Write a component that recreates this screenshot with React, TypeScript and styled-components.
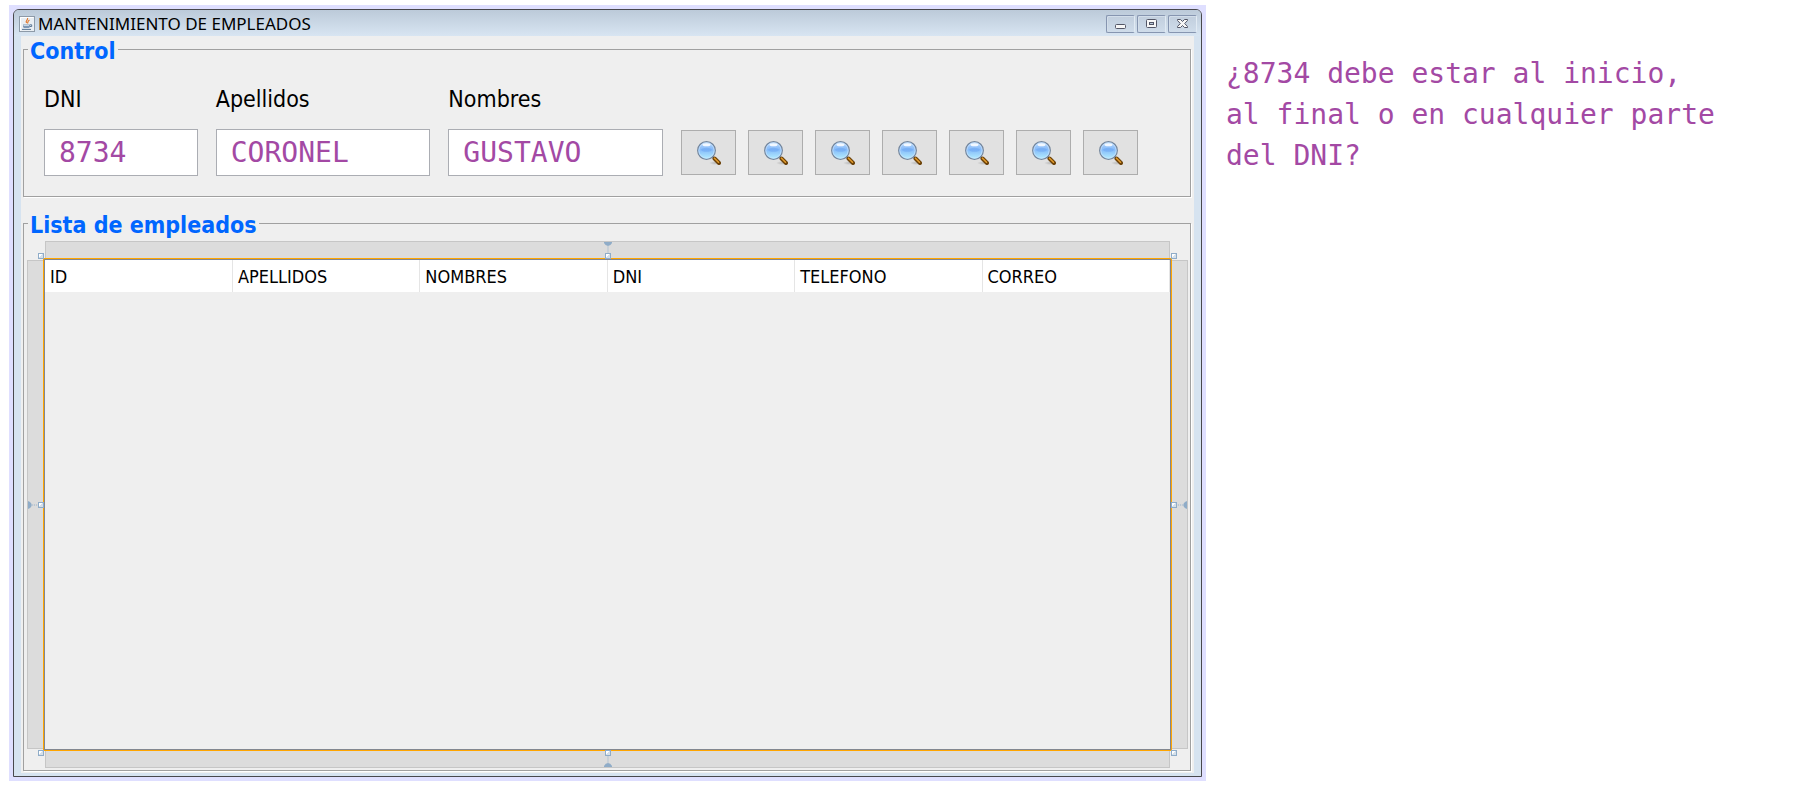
import React from "react";
import styled, { createGlobalStyle, css } from "styled-components";

const ui = '"DejaVu Sans Condensed", Tahoma, "DejaVu Sans", sans-serif';
const mono = '"DejaVu Sans Mono", "Liberation Mono", monospace';
const purple = "#a349a4";
const face = "#efefef";

const Global = createGlobalStyle`
  *, *::before, *::after { box-sizing: border-box; }
  body { margin: 0; background: #fff; color: #000; font-family: ${ui}; }
`;

const Page = styled.div`
  display: grid;
  grid-template-columns: 21fr 10fr;
  column-gap: 18px;
  min-height: 100vh;
  padding: 5px 0 8px 9px;
`;

const Frame = styled.div`
  display: flex;
  min-width: 0;
  padding: 4px;
  background: #dfdfff;
`;

const Window = styled.main`
  flex: 1;
  min-width: 0;
  display: flex;
  flex-direction: column;
  padding: 0 7px 3px;
  background: #d6e3f0;
  border: 1px solid #48484c;
  border-radius: 6px 6px 0 0;
  overflow: hidden;
`;

const TitleBar = styled.header`
  display: flex;
  align-items: center;
  height: 26px;
  margin: 0 -7px;
  padding: 2px 4px 0 5px;
  background: linear-gradient(#bccad9, #d8e5f2);
`;

const Title = styled.h1`
  flex: 1;
  margin: 0 0 0 3px;
  font: 400 17px/24px "Noto Sans", "Segoe UI", sans-serif;
`;

const Caption = styled.div`
  display: flex;
  gap: 2px;
`;

const CaptionButton = styled.button`
  display: grid;
  place-items: center;
  width: 29px;
  height: 18px;
  padding: 0;
  background: linear-gradient(#c1cedd, #cfdcea);
  border: 1px solid #8695b0;
  border-right-color: #e1eaf3;
  border-radius: 2px;
  box-shadow: inset 1px 1px #d3deea;
`;

const Content = styled.div`
  flex: 1;
  display: flex;
  flex-direction: column;
  padding: 0 2px 2px;
  background: ${face};
`;

const Group = styled.fieldset<{ $fill?: boolean }>`
  min-width: 0;
  margin: 0 1px 0 0;
  padding: 0 2px 2px 3px;
  border: 1px solid #a0a0a0;
  box-shadow: 1px 1px #fff;
  ${(p) =>
    p.$fill &&
    css`
      flex: 1;
      display: flex;
      flex-direction: column;
      margin-top: 13px;
    `}
`;

const Legend = styled.legend`
  height: 26px;
  margin-left: 1px;
  padding: 0 2px;
  font: 700 23px/30px ${ui};
  color: #06f;
`;

const Controls = styled.div`
  display: grid;
  grid-template-columns: 154fr 215fr 215fr auto;
  column-gap: 18px;
  align-items: end;
  padding: 21px 50px 18px 17px;
`;

const Field = styled.label`
  display: flex;
  flex-direction: column;
  gap: 14px;
  min-width: 0;
  font: 400 23px/32px ${ui};
`;

const TextBox = styled.input`
  width: 100%;
  height: 47px;
  padding: 0 14px;
  font: 400 28px/40px ${mono};
  color: ${purple};
  background: #fff;
  border: 1px solid #abadb3;
`;

const Actions = styled.div`
  display: flex;
  align-items: center;
  gap: 12px;
  height: 47px;
`;

const SearchButton = styled.button`
  display: grid;
  place-items: center;
  width: 55px;
  height: 45px;
  padding: 0;
  background: #e1e1e1;
  border: 1px solid #adadad;
`;

const Designer = styled.div`
  flex: 1;
  display: grid;
  grid-template-columns: 16px minmax(0, 1fr) 16px;
  grid-template-rows: 17px minmax(300px, 1fr) 17px;
  margin-top: 5px;
`;

type Side = "top" | "right" | "bottom" | "left";

const stripCss = {
  top: css`grid-area: 1 / 2; margin: 0 2px; border-width: 1px 1px 0;`,
  right: css`grid-area: 2 / 3; margin: 2px 0; border-width: 1px 1px 1px 0;`,
  bottom: css`grid-area: 3 / 2; margin: 0 2px; border-width: 0 1px 1px;`,
  left: css`grid-area: 2 / 1; margin: 2px 0; border-width: 1px 0 1px 1px;`,
};

const Strip = styled.div<{ $side: Side }>`
  display: flex;
  align-items: center;
  justify-content: center;
  background: #dcdcdc;
  border: 0 solid #c6c6c6;
  ${(p) => stripCss[p.$side]}
`;

const Selected = styled.section`
  position: relative;
  grid-area: 2 / 2;
  border: 1px solid #ffa500;
`;

const handlePos: Record<string, ReturnType<typeof css>> = {
  nw: css`left: -6px; top: -6px;`,
  n: css`left: calc(50% - 3px); top: -6px;`,
  ne: css`right: -6px; top: -6px;`,
  e: css`right: -6px; top: calc(50% - 3px);`,
  se: css`right: -6px; bottom: -6px;`,
  s: css`left: calc(50% - 3px); bottom: -6px;`,
  sw: css`left: -6px; bottom: -6px;`,
  w: css`left: -6px; top: calc(50% - 3px);`,
};

const Handle = styled.i<{ $at: string }>`
  position: absolute;
  width: 6px;
  height: 6px;
  background: linear-gradient(135deg, #fff 50%, #d5e0ea 50%);
  border: 1px solid #8facc8;
  ${(p) => handlePos[p.$at]}
`;

const Scroll = styled.div`
  height: 100%;
  border: 1px solid #828790;
`;

const Table = styled.table`
  width: 100%;
  table-layout: fixed;
  border-collapse: collapse;
  border-right: 1px solid ${face};
`;

const Th = styled.th`
  height: 32px;
  padding: 2px 5px 0;
  text-align: left;
  font: 400 18px/22px ${ui};
  background: #fff;
  border-right: 1px solid #e5e5e5;
`;

const Note = styled.p`
  margin: 48px 0 0;
  padding: 0 16px 0 2px;
  font: 400 28px/41px ${mono};
  color: ${purple};
`;

const JavaIcon = () => (
  <svg width="16" height="16" viewBox="0 0 16 16" aria-hidden="true">
    <rect x=".5" y=".5" width="15" height="15" fill="#e9eef3" stroke="#8d9aa8" />
    <path d="M1.5 14.5V1.5H14.5" fill="none" stroke="#fff" />
    <path d="M8.5 2C9.5 4 6 4.500 7.500 7M10.500 4C8.500 5 9 6 8.500 7.500" fill="none" stroke="#e07830" strokeWidth="1.200" />
    <path d="M4 8.500H11V10.500Q10.500 12 9.500 12H5.500Q4.200 12 4 10.500Z" fill="#7d97b5" />
    <path d="M11 8.800H12.700V10.500H11M3 13.400H12" fill="none" stroke="#587594" />
    <path d="M4.500 9.500H10" stroke="#c9d6e4" />
  </svg>
);

const MinimizeIcon = () => (
  <svg width="13" height="12" viewBox="0 0 13 12" aria-hidden="true">
    <rect x="1.500" y="6.500" width="10" height="4" rx="1" fill="#f7f7f7" stroke="#535666" />
  </svg>
);

const MaximizeIcon = () => (
  <svg width="13" height="12" viewBox="0 0 13 12" aria-hidden="true">
    <rect x="1.500" y="1.500" width="10" height="8" rx="1" fill="#f7f7f7" stroke="#535666" />
    <rect x="4.500" y="4.500" width="4" height="2" fill="#b9c8d8" stroke="#535666" />
  </svg>
);

const CloseIcon = () => (
  <svg width="13" height="12" viewBox="0 0 13 12" aria-hidden="true">
    <path
      d="M1.500 1.500H4.500L6.500 3.500L8.500 1.500H11.500V2.500L8.700 5.500L11.500 8.500V9.500H8.500L6.500 7.500L4.500 9.500H1.500V8.500L4.300 5.500L1.500 2.500Z"
      fill="#f7f7f7"
      stroke="#535666"
      strokeLinejoin="round"
    />
  </svg>
);

const Lens = () => (
  <svg width="24" height="24" viewBox="0 0 24 24" aria-hidden="true">
    <defs>
      <linearGradient id="glass" x1="0" y1="0" x2="0" y2="1">
        <stop offset="0" stopColor="#b5d6fc" />
        <stop offset=".45" stopColor="#86bbf9" />
        <stop offset="1" stopColor="#b4f0ff" />
      </linearGradient>
      <radialGradient id="shade">
        <stop offset="0" stopColor="#000" stopOpacity=".18" />
        <stop offset="1" stopColor="#000" stopOpacity="0" />
      </radialGradient>
    </defs>
    <ellipse cx="18" cy="22" rx="6" ry="2" fill="url(#shade)" />
    <path d="M15.500 15.500L18 18" stroke="#8b8f96" strokeWidth="2" />
    <path d="M17.500 17.500L22 22" stroke="#6b4108" strokeWidth="4" strokeLinecap="round" />
    <path d="M17.500 17.200L21.500 21.200" stroke="#e09a2c" strokeWidth="1.600" strokeLinecap="round" />
    <circle cx="9.500" cy="9.500" r="8.800" fill="url(#glass)" stroke="#74869c" strokeWidth="1.300" />
    <circle cx="9.500" cy="9.500" r="7.700" fill="none" stroke="#c8e2fd" strokeWidth=".8" />
    <ellipse cx="9.500" cy="8.800" rx="5.500" ry="2" fill="#5f9bf0" opacity=".38" />
    <ellipse cx="9.500" cy="3.800" rx="4" ry="1.500" fill="#fff" opacity=".85" />
  </svg>
);

const Anchor = ({ side }: { side: Side }) => {
  const turn = { top: 0, right: 90, bottom: 180, left: 270 }[side];
  return (
    <svg width="16" height="16" viewBox="0 0 16 16" aria-hidden="true">
      <g transform={`rotate(${turn} 8 8)`}>
        <path d="M4 0H12V1Q10.500 4 8 4Q5.500 4 4 1Z" fill="#8facc8" />
        <path d="M8 4.500V12" stroke="#8facc8" strokeDasharray="1 1" />
      </g>
    </svg>
  );
};

const fields = [
  { id: "dni", label: "DNI", value: "8734" },
  { id: "apellidos", label: "Apellidos", value: "CORONEL" },
  { id: "nombres", label: "Nombres", value: "GUSTAVO" },
];
const columns = ["ID", "APELLIDOS", "NOMBRES", "DNI", "TELEFONO", "CORREO"];
const sides: Side[] = ["top", "right", "bottom", "left"];

export default function App() {
  return (
    <>
      <Global />
      <Page>
        <Frame>
          <Window>
            <TitleBar>
              <JavaIcon />
              <Title>MANTENIMIENTO DE EMPLEADOS</Title>
              <Caption>
                <CaptionButton aria-label="Minimizar"><MinimizeIcon /></CaptionButton>
                <CaptionButton aria-label="Maximizar"><MaximizeIcon /></CaptionButton>
                <CaptionButton aria-label="Cerrar"><CloseIcon /></CaptionButton>
              </Caption>
            </TitleBar>
            <Content>
              <Group>
                <Legend>Control</Legend>
                <Controls>
                  {fields.map((f) => (
                    <Field key={f.id} htmlFor={f.id}>
                      {f.label}
                      <TextBox id={f.id} defaultValue={f.value} />
                    </Field>
                  ))}
                  <Actions>
                    {[1, 2, 3, 4, 5, 6, 7].map((n) => (
                      <SearchButton key={n} aria-label={`Buscar ${n}`}><Lens /></SearchButton>
                    ))}
                  </Actions>
                </Controls>
              </Group>
              <Group $fill>
                <Legend>Lista de empleados</Legend>
                <Designer>
                  {sides.map((s) => (
                    <Strip key={s} $side={s}><Anchor side={s} /></Strip>
                  ))}
                  <Selected>
                    <Scroll>
                      <Table>
                        <thead>
                          <tr>
                            {columns.map((c) => <Th key={c} scope="col">{c}</Th>)}
                          </tr>
                        </thead>
                      </Table>
                    </Scroll>
                    {Object.keys(handlePos).map((at) => <Handle key={at} $at={at} />)}
                  </Selected>
                </Designer>
              </Group>
            </Content>
          </Window>
        </Frame>
        <Note>
          ¿8734 debe estar al inicio,<br />
          al final o en cualquier parte<br />
          del DNI?
        </Note>
      </Page>
    </>
  );
}
